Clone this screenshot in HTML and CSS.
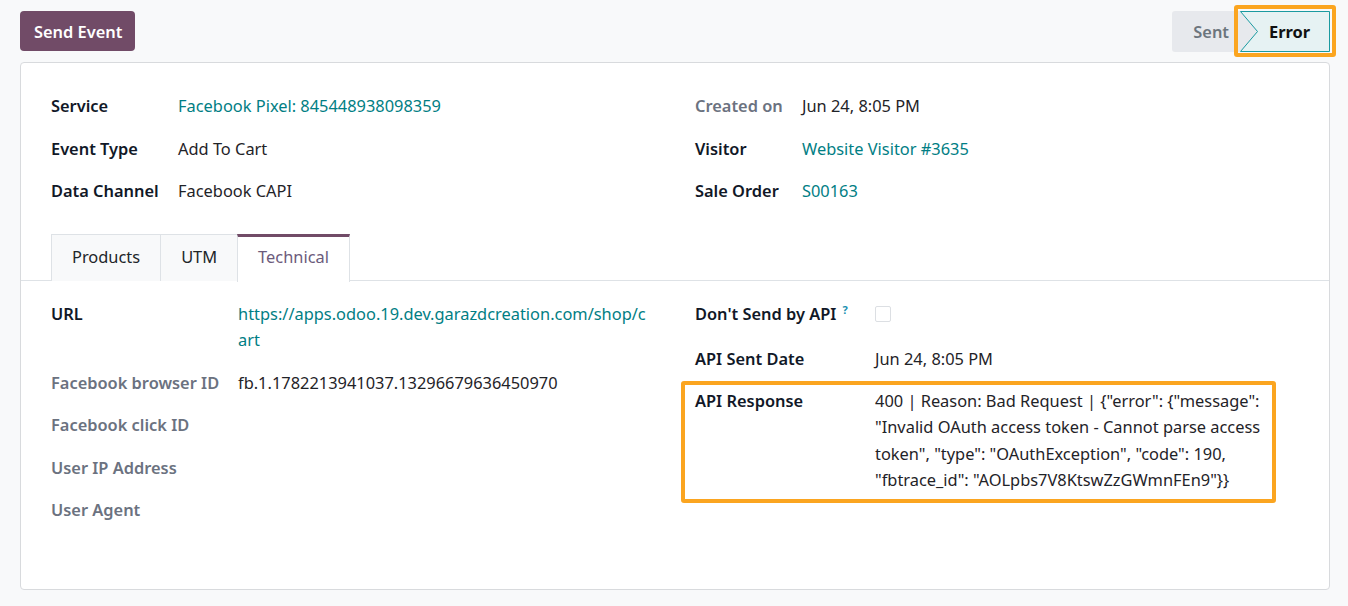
FILE: index.html
```html
<!DOCTYPE html>
<html lang="en">
<head>
<meta charset="utf-8">
<title>Event</title>
<link rel="stylesheet" href="styles.css">
</head>
<body>
<div class="page">
  <div class="control-bar">
    <button class="btn-primary" type="button">Send Event</button>
    <div class="statusbar">
      <span class="status">Sent</span>
      <span class="status current">
        <svg class="status-shape" viewBox="0 0 90 41" preserveAspectRatio="none" aria-hidden="true">
          <polygon points="0.5,0.5 89.5,0.5 89.5,40.5 0.5,40.5 17.5,20.5" fill="#e6f2f3" stroke="#1a9aa0" stroke-width="1"/>
        </svg>
        <span class="status-text">Error</span>
        <span class="highlight highlight-status"></span>
      </span>
    </div>
  </div>

  <div class="sheet">
    <div class="group">
      <div class="col">
        <div class="field"><div class="label lbl-top-l">Service</div><div class="value link">Facebook Pixel: 845448938098359</div></div>
        <div class="field"><div class="label lbl-top-l">Event Type</div><div class="value">Add To Cart</div></div>
        <div class="field"><div class="label lbl-top-l">Data Channel</div><div class="value">Facebook CAPI</div></div>
      </div>
      <div class="col">
        <div class="field"><div class="label muted lbl-top-r">Created on</div><div class="value">Jun 24, 8:05 PM</div></div>
        <div class="field"><div class="label lbl-top-r">Visitor</div><div class="value link">Website Visitor #3635</div></div>
        <div class="field"><div class="label lbl-top-r">Sale Order</div><div class="value link">S00163</div></div>
      </div>
    </div>

    <div class="notebook">
      <div class="tabs">
        <span class="tab">Products</span>
        <span class="tab">UTM</span>
        <span class="tab active">Technical</span>
      </div>
      <div class="group pane">
        <div class="col">
          <div class="field"><div class="label lbl-tech-l">URL</div><div class="value link url">https://apps.odoo.19.dev.garazdcreation.com/shop/cart</div></div>
          <div class="field"><div class="label muted lbl-tech-l">Facebook browser ID</div><div class="value">fb.1.1782213941037.13296679636450970</div></div>
          <div class="field"><div class="label muted lbl-tech-l">Facebook click ID</div><div class="value"></div></div>
          <div class="field"><div class="label muted lbl-tech-l">User IP Address</div><div class="value"></div></div>
          <div class="field"><div class="label muted lbl-tech-l">User Agent</div><div class="value"></div></div>
        </div>
        <div class="col">
          <div class="field field-check"><div class="label lbl-tech-r">Don't Send by API <sup class="help">?</sup></div><div class="value"><span class="checkbox"></span></div></div>
          <div class="field"><div class="label lbl-tech-r">API Sent Date</div><div class="value">Jun 24, 8:05 PM</div></div>
          <div class="field field-response">
            <div class="label lbl-tech-r">API Response</div>
            <div class="value">400 | Reason: Bad Request | {"error": {"message": "Invalid OAuth access token - Cannot parse access token", "type": "OAuthException", "code": 190, "fbtrace_id": "AOLpbs7V8KtswZzGWmnFEn9"}}</div>
            <span class="highlight highlight-response"></span>
          </div>
        </div>
      </div>
    </div>
  </div>
</div>
</body>
</html>
```

FILE: styles.css
```css
* { box-sizing: border-box; }

html, body {
  margin: 0;
  padding: 0;
}

body {
  background: #f8f9fa;
  font-family: "Noto Sans", "Liberation Sans", sans-serif;
  font-size: 16.4px;
  color: #212529;
}

.page {
  width: 1348px;
  height: 606px;
  overflow: hidden;
}

.control-bar {
  display: flex;
  justify-content: space-between;
  align-items: flex-start;
  padding: 11px 18px 0 20px;
  height: 62px;
}

.btn-primary {
  height: 40px;
  padding: 0 13px 0 14px;
  background: #714b67;
  color: #fff;
  border: 0;
  border-radius: 4px;
  font-family: inherit;
  font-size: 16.4px;
  font-weight: 600;
}

.statusbar {
  display: flex;
  height: 41px;
}

.status {
  display: flex;
  align-items: center;
  padding: 0 11px 0 21px;
  background: #e7e9ed;
  color: #6c757d;
  font-weight: 600;
  border-radius: 3px 0 0 3px;
}

.status.current {
  position: relative;
  width: 90px;
  padding: 0 0 0 29px;
  color: #111;
  font-weight: 700;
  border-radius: 0;
}

.status-shape {
  position: absolute;
  inset: 0;
  width: 100%;
  height: 100%;
}

.status-text {
  position: relative;
}

.highlight {
  position: absolute;
  border: 4px solid #fba520;
  border-radius: 3px;
  pointer-events: none;
}

.highlight-status {
  top: -6px;
  bottom: -5px;
  left: -6px;
  right: -6px;
}

.sheet {
  margin: 0 18px 0 20px;
  background: #fff;
  border: 1px solid #d8dadd;
  border-radius: 4px;
  padding: 22px 30px 58px;
  height: 528px;
}

.group {
  display: grid;
  grid-template-columns: 1fr 1fr;
  column-gap: 40px;
}

.field {
  display: flex;
  padding: 8px 0;
  line-height: 26.5px;
  position: relative;
}

.label {
  flex: none;
  font-weight: 600;
  color: #111827;
}

.label.muted {
  color: #6b7280;
}

.lbl-top-l { width: 127px; }
.lbl-top-r { width: 107px; }
.lbl-tech-l { width: 187px; }
.lbl-tech-r { width: 180px; }

.value {
  flex: 1;
  min-width: 0;
  color: #1f2328;
}

.value.link {
  color: #017e84;
}

.url {
  word-break: break-all;
  padding-right: 5px;
}

.help {
  color: #1a8fb0;
  font-size: 11px;
  font-weight: 700;
  vertical-align: 6px;
  line-height: 0;
  margin-left: 2px;
}

.checkbox {
  display: inline-block;
  width: 16px;
  height: 16px;
  border: 1px solid #dcdfe3;
  border-radius: 2px;
  vertical-align: -2px;
}

.field-check {
  padding-bottom: 11px;
}

.field-response {
  margin-top: -1px;
}

.highlight-response {
  top: 1px;
  bottom: -1px;
  left: -14px;
  right: 23px;
}

.notebook {
  margin-top: 21px;
}

.tabs {
  display: flex;
  margin: 0 -30px;
  padding-left: 30px;
  border-bottom: 1px solid #dee2e6;
  height: 47px;
}

.tab {
  display: flex;
  align-items: center;
  padding: 0 20px 2px;
  height: 47px;
  background: #f8f9fa;
  border: 1px solid #dee2e6;
  border-bottom: 0;
  margin-right: -1px;
  color: #212529;
}

.tab.active {
  background: #fff;
  border-top: 3px solid #714b67;
  color: #6b5b7b;
  height: 48px;
  margin-bottom: -1px;
  padding-bottom: 6px;
}

.pane {
  padding-top: 12px;
}
```
